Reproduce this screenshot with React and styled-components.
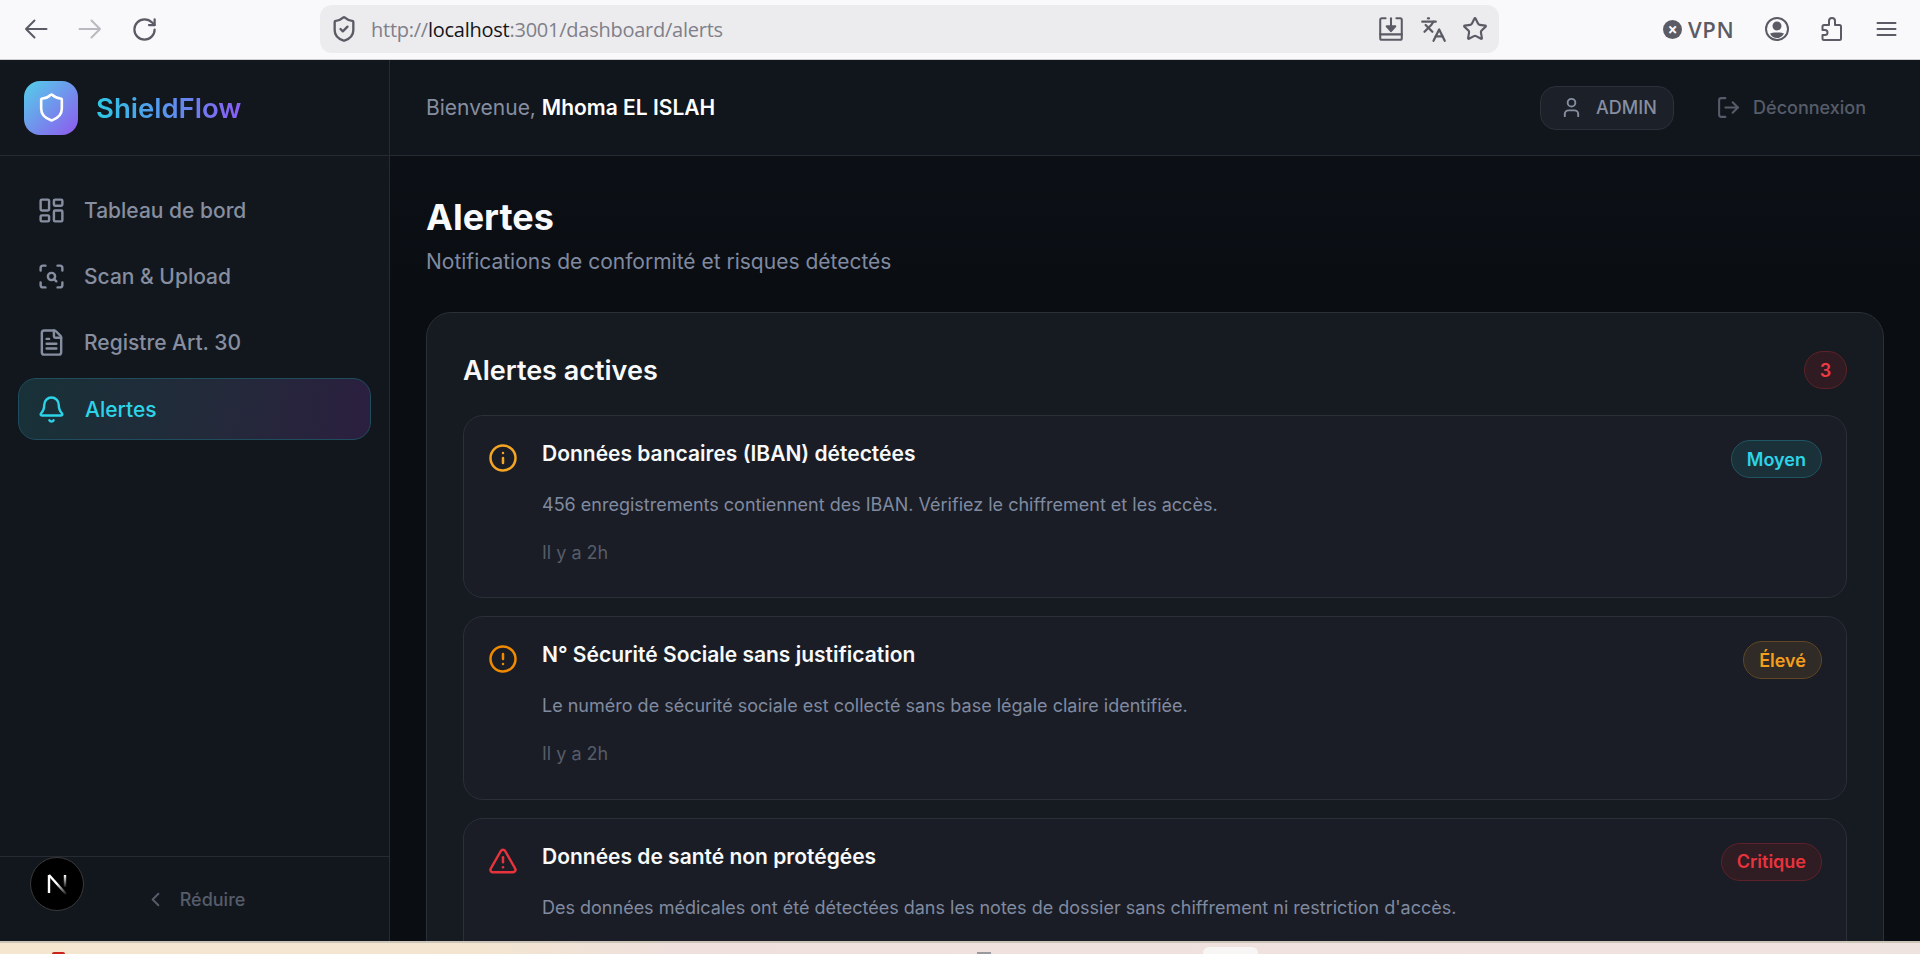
import React from 'react';
import styled, { createGlobalStyle } from 'styled-components';
import {
  RotateCw, ShieldCheck, Languages, Star, LayoutDashboard, ScanSearch,
  FileText, Bell, Info, CircleAlert, TriangleAlert, ChevronLeft, User, LogOut, Shield,
} from 'lucide-react';

const GlobalStyle = createGlobalStyle`
  * { box-sizing: border-box; }
  html, body { margin: 0; padding: 0; height: 954px; overflow: hidden; background: #0a0d12; }
  body { font-family: Inter, "Noto Sans", sans-serif; }
`;

const Page = styled.div`
  height: 954px;
  display: flex;
  flex-direction: column;
  position: relative;
`;

/* browser chrome */
const BrowserBar = styled.div`
  height: 60px;
  flex: none;
  display: flex;
  align-items: center;
  background: #f9f9fb;
  border-bottom: 1px solid #cfcfd3;
  padding-bottom: 1px;
`;

const NavIcons = styled.div`
  width: 320px;
  flex: none;
  display: flex;
  align-items: center;
  gap: 30px;
  padding-left: 24px;
  color: #5b5b66;
`;

const ReloadSlot = styled.span`
  display: flex;
  margin-left: -1px;
`;

const AddressBar = styled.div`
  width: 1179px;
  height: 48px;
  flex: none;
  display: flex;
  align-items: center;
  background: #ececee;
  border-radius: 12px;
  padding: 0 11px 0 10px;
  color: #5b5b66;
`;

const Url = styled.div`
  flex: 1;
  margin-left: 13px;
  font-family: "Open Sans", sans-serif;
  font-size: 20px;
  letter-spacing: -0.25px;
  color: #80808a;

  b {
    font-weight: 400;
    color: #15141a;
  }
`;

const AddressIcons = styled.div`
  display: flex;
  align-items: center;
  gap: 15px;
`;

const ToolIcons = styled.div`
  flex: 1;
  display: flex;
  align-items: center;
  padding-left: 164px;
  color: #5b5b66;
`;

const Vpn = styled.div`
  display: flex;
  align-items: center;
  gap: 6px;
  width: 101px;
  font-family: "Open Sans", sans-serif;
  font-size: 22px;
  letter-spacing: 0.6px;
  font-weight: 600;
`;

const VpnDot = styled.span`
  width: 19px;
  height: 19px;
  border-radius: 50%;
  background: #5b5b66;
  color: #f9f9fb;
  display: flex;
  align-items: center;
  justify-content: center;
  font-size: 17px;
  line-height: 19px;
  letter-spacing: 0;
  font-weight: 700;
`;

const ToolIconSlot = styled.span`
  display: flex;
  width: 56px;
`;

const Shell = styled.div`
  flex: 1;
  min-height: 0;
  display: flex;
`;

/* sidebar */
const Sidebar = styled.aside`
  width: 390px;
  flex: none;
  display: flex;
  flex-direction: column;
  background: #12171e;
  border-right: 1px solid #262b33;
`;

const Brand = styled.div`
  height: 96px;
  flex: none;
  display: flex;
  align-items: center;
  gap: 18px;
  padding-left: 24px;
  border-bottom: 1px solid #262b33;
`;

const LogoBox = styled.div`
  width: 54px;
  height: 54px;
  border-radius: 16px;
  background: linear-gradient(135deg, #52d0ea, #8f58ee);
  display: flex;
  align-items: center;
  justify-content: center;
  color: #fff;
`;

const BrandName = styled.div`
  font-size: 27.5px;
  font-weight: 600;
  background: linear-gradient(90deg, #2cc8e4, #8b5cf6);
  -webkit-background-clip: text;
  background-clip: text;
  color: transparent;
`;

const Nav = styled.nav`
  flex: 1;
  display: flex;
  flex-direction: column;
  gap: 5px;
  padding: 24px 18px 0;
`;

const NavItem = styled.div`
  height: ${p => (p.$active ? '62px' : '61px')};
  display: flex;
  align-items: center;
  gap: ${p => (p.$active ? '19px' : '18px')};
  padding-left: 18px;
  border-radius: 18px;
  font-size: 21px;
  font-weight: 500;
  color: ${p => (p.$active ? '#2dd4e8' : '#868ea0')};
  border: 1px solid ${p => (p.$active ? '#1f4d5e' : 'transparent')};
  background: ${p => (p.$active ? 'linear-gradient(100deg, #183138, #232a3a 55%, #2b1f3f)' : 'transparent')};
`;

const SidebarFoot = styled.div`
  height: 85px;
  flex: none;
  display: flex;
  align-items: center;
  justify-content: center;
  gap: 13px;
  border-top: 1px solid #262b33;
  color: #565c69;
  font-size: 18px;
  font-weight: 500;
`;

const DevBadge = styled.div`
  position: absolute;
  left: 30px;
  top: 857px;
  width: 54px;
  height: 54px;
  border-radius: 50%;
  background: #000;
  border: 1px solid #3a3a3a;
  display: flex;
  align-items: center;
  justify-content: center;
`;

/* main column */
const Main = styled.main`
  flex: 1;
  min-width: 0;
  display: flex;
  flex-direction: column;
  background: linear-gradient(180deg, #0e1218, #0a0d12 25%);
`;

const Header = styled.header`
  height: 96px;
  flex: none;
  display: flex;
  align-items: center;
  padding: 0 54px 0 36px;
  background: #11161d;
  border-bottom: 1px solid #262b33;
`;

const Welcome = styled.div`
  flex: 1;
  font-size: 21px;
  color: #868ea0;

  b {
    font-weight: 600;
    color: #fff;
  }
`;

const RolePill = styled.div`
  width: 134px;
  height: 44px;
  display: flex;
  align-items: center;
  gap: 13px;
  padding-left: 19px;
  background: #1c2028;
  border: 1px solid #2b3039;
  border-radius: 16px;
  color: #868ea0;
  font-size: 18px;
  font-weight: 500;
`;

const Logout = styled.div`
  display: flex;
  align-items: center;
  gap: 12px;
  margin-left: 42px;
  color: #565c69;
  font-size: 18px;
  font-weight: 500;
`;

const Content = styled.div`
  flex: 1;
  min-height: 0;
  overflow: hidden;
  padding: 38px 36px 0 36px;
`;

const PageTitle = styled.h1`
  margin: 0;
  font-size: 36px;
  line-height: 46px;
  font-weight: 700;
  color: #f8f9fb;
`;

const PageSub = styled.p`
  margin: 8px 0 0;
  font-size: 21px;
  line-height: 28px;
  color: #808aa0;
`;

const Card = styled.section`
  margin-top: 36px;
  padding: 37px 36px;
  background: #161a21;
  border: 1px solid #2a2f38;
  border-radius: 25px;
`;

const CardHead = styled.div`
  display: flex;
  align-items: center;
  justify-content: space-between;
  height: 40px;
  margin-bottom: 25px;
`;

const CardTitle = styled.h2`
  margin: 0;
  font-size: 27px;
  font-weight: 600;
  color: #f8f9fb;
`;

const CountBadge = styled.span`
  width: 43px;
  height: 38px;
  display: flex;
  align-items: center;
  justify-content: center;
  border-radius: 19px;
  background: #301b22;
  border: 1px solid #5d2229;
  color: #ef3a44;
  font-size: 18px;
  font-weight: 600;
`;

const AlertList = styled.div`
  display: flex;
  flex-direction: column;
  gap: 18px;
`;

const AlertRow = styled.article`
  height: 183.4px;
  display: flex;
  align-items: flex-start;
  gap: 24px;
  padding: 24px 24px 0 24px;
  background: #1a1d25;
  border: 1px solid #2a2f38;
  border-radius: 20px;
`;

const AlertIcon = styled.div`
  flex: none;
  display: flex;
  margin-top: 3px;
  color: ${p => p.$color};
`;

const AlertBody = styled.div`
  flex: 1;
  min-width: 0;
`;

const AlertTitle = styled.h3`
  margin: 0;
  font-size: 21px;
  line-height: 28px;
  font-weight: 600;
  color: #f8f9fb;
`;

const AlertText = styled.p`
  margin: 24px 0 0;
  font-size: 18px;
  line-height: 26px;
  color: #808aa0;
`;

const AlertTime = styled.div`
  margin-top: 22px;
  font-size: 18px;
  line-height: 26px;
  color: #565c69;
`;

const levels = {
  Moyen: { color: '#2dd4e8', bg: '#1b3139', border: '#1f5562' },
  'Élevé': { color: '#f59e1b', bg: '#302b27', border: '#5f4723' },
  Critique: { color: '#e8333d', bg: '#301c23', border: '#5d2229' },
};

const Level = styled.span`
  flex: none;
  height: 38px;
  display: flex;
  align-items: center;
  padding: 0 15px;
  border-radius: 19px;
  font-size: 18px;
  font-weight: 600;
  color: ${p => levels[p.$level].color};
  background: ${p => levels[p.$level].bg};
  border: 1px solid ${p => levels[p.$level].border};
`;

/* sliver of the desktop below the window */
const DesktopStrip = styled.div`
  height: 13px;
  flex: none;
  display: flex;
  align-items: flex-end;
  background: linear-gradient(90deg, #f4e6cf, #f3e5d0 25%, #efe0dd 35%, #efe3e0);
  border-top: 2px solid #cbc4b8;
`;

const RedDot = styled.span`
  width: 13px;
  height: 2px;
  margin-left: 52px;
  border-radius: 6px 6px 0 0;
  background: #c9231b;
`;

const GreyDot = styled.span`
  width: 14px;
  height: 2px;
  margin-left: 912px;
  background: #9a9a9e;
`;

const WhiteTab = styled.span`
  width: 55px;
  height: 7px;
  margin-left: 212px;
  border-radius: 6px 6px 0 0;
  background: #f8f6f4;
`;

const alerts = [
  {
    title: 'Données bancaires (IBAN) détectées',
    text: '456 enregistrements contiennent des IBAN. Vérifiez le chiffrement et les accès.',
    time: 'Il y a 2h',
    level: 'Moyen',
    Icon: Info,
    color: '#f5a524',
  },
  {
    title: 'N° Sécurité Sociale sans justification',
    text: 'Le numéro de sécurité sociale est collecté sans base légale claire identifiée.',
    time: 'Il y a 2h',
    level: 'Élevé',
    Icon: CircleAlert,
    color: '#f08a00',
  },
  {
    title: 'Données de santé non protégées',
    text: "Des données médicales ont été détectées dans les notes de dossier sans chiffrement ni restriction d'accès.",
    level: 'Critique',
    Icon: TriangleAlert,
    color: '#e8333d',
  },
];

const menu = [
  { label: 'Tableau de bord', Icon: LayoutDashboard },
  { label: 'Scan & Upload', Icon: ScanSearch },
  { label: 'Registre Art. 30', Icon: FileText },
  { label: 'Alertes', Icon: Bell, active: true },
];

const BackIcon = () => (
  <svg width="24" height="24" viewBox="0 0 24 24" fill="none" stroke="currentColor" strokeWidth="2" strokeLinecap="round" strokeLinejoin="round">
    <path d="M22.500 12H2M10.500 3.500L2 12l8.500 8.500" />
  </svg>
);

const ForwardIcon = () => (
  <svg width="24" height="24" viewBox="0 0 24 24" fill="none" stroke="#b9b9bf" strokeWidth="2" strokeLinecap="round" strokeLinejoin="round">
    <path d="M1.500 12H22M13.500 3.500L22 12l-8.500 8.500" />
  </svg>
);

const SaveIcon = () => (
  <svg width="28" height="28" viewBox="0 0 26 26" fill="none" stroke="currentColor" strokeWidth="1.900" strokeLinecap="round" strokeLinejoin="round">
    <path d="M8 3H4.500A1.500 1.500 0 0 0 3 4.500v17A1.500 1.500 0 0 0 4.500 23h17a1.500 1.500 0 0 0 1.500-1.500v-17A1.500 1.500 0 0 0 21.500 3H18" />
    <path d="M3 18h20" />
    <path d="M13 3v9" />
    <path d="M9 10.500h8L13 15z" fill="currentColor" />
  </svg>
);

const AccountIcon = () => (
  <svg width="26" height="26" viewBox="0 0 26 26" fill="none" stroke="currentColor" strokeWidth="2">
    <circle cx="13" cy="13" r="11" />
    <circle cx="13" cy="10" r="3.500" fill="currentColor" />
    <path d="M6 17.500c2-1.500 12-1.500 14 0c-1.500 3-4 4.500-7 4.500s-5.500-1.500-7-4.500z" fill="currentColor" stroke="none" />
  </svg>
);

const PuzzleIcon = () => (
  <svg width="24" height="26" viewBox="0 0 24 26" fill="none" stroke="currentColor" strokeWidth="2" strokeLinejoin="round">
    <path d="M4 24a1.500 1.500 0 0 1-1.500-1.500V19h2.500a2.500 2.500 0 0 0 0-5H2.500v-3.500A1.500 1.500 0 0 1 4 9h5V5a3 3 0 0 1 6 0v4h4.500A1.500 1.500 0 0 1 21 10.500v12a1.500 1.500 0 0 1-1.500 1.500z" />
  </svg>
);

const BurgerIcon = () => (
  <svg width="21" height="18" viewBox="0 0 21 18" stroke="currentColor" strokeWidth="2" strokeLinecap="round">
    <path d="M1.500 3h18M1.500 9h18M1.500 15h18" />
  </svg>
);

const NextLogo = () => (
  <svg width="26" height="26" viewBox="0 0 26 26" fill="none">
    <defs>
      <linearGradient id="next-diag" gradientUnits="userSpaceOnUse" x1="5" y1="4" x2="22" y2="23">
        <stop offset="0.45" stopColor="#fff" />
        <stop offset="1" stopColor="#fff" stopOpacity="0.1" />
      </linearGradient>
      <linearGradient id="next-stem" gradientUnits="userSpaceOnUse" x1="21" y1="4" x2="21" y2="16">
        <stop offset="0" stopColor="#fff" />
        <stop offset="1" stopColor="#fff" stopOpacity="0.1" />
      </linearGradient>
    </defs>
    <path d="M5 4v18" stroke="#fff" strokeWidth="2.400" />
    <path d="M5 4L22 23" stroke="url(#next-diag)" strokeWidth="2.400" />
    <path d="M21 4v12" stroke="url(#next-stem)" strokeWidth="2.400" />
  </svg>
);

export default function App() {
  return (
    <Page>
      <GlobalStyle />
      <BrowserBar>
        <NavIcons>
          <BackIcon />
          <ForwardIcon />
          <ReloadSlot><RotateCw size={27} strokeWidth={2} /></ReloadSlot>
        </NavIcons>
        <AddressBar>
          <ShieldCheck size={28} strokeWidth={2} />
          <Url>http://<b>localhost</b>:3001/dashboard/alerts</Url>
          <AddressIcons>
            <SaveIcon />
            <Languages size={27} strokeWidth={2} />
            <Star size={26} strokeWidth={2} />
          </AddressIcons>
        </AddressBar>
        <ToolIcons>
          <Vpn>
            <VpnDot>×</VpnDot>
            VPN
          </Vpn>
          <ToolIconSlot><AccountIcon /></ToolIconSlot>
          <ToolIconSlot><PuzzleIcon /></ToolIconSlot>
          <BurgerIcon />
        </ToolIcons>
      </BrowserBar>

      <Shell>
        <Sidebar>
          <Brand>
            <LogoBox><Shield size={31} strokeWidth={2} /></LogoBox>
            <BrandName>ShieldFlow</BrandName>
          </Brand>
          <Nav>
            {menu.map(({ label, Icon, active }) => (
              <NavItem key={label} $active={active}>
                <Icon size={29} strokeWidth={2} />
                {label}
              </NavItem>
            ))}
          </Nav>
          <SidebarFoot>
            <ChevronLeft size={23} strokeWidth={2} />
            Réduire
          </SidebarFoot>
        </Sidebar>

        <Main>
          <Header>
            <Welcome>Bienvenue, <b>Mhoma EL ISLAH</b></Welcome>
            <RolePill>
              <User size={23} strokeWidth={2} />
              ADMIN
            </RolePill>
            <Logout>
              <LogOut size={25} strokeWidth={2} />
              Déconnexion
            </Logout>
          </Header>
          <Content>
            <PageTitle>Alertes</PageTitle>
            <PageSub>Notifications de conformité et risques détectés</PageSub>
            <Card>
              <CardHead>
                <CardTitle>Alertes actives</CardTitle>
                <CountBadge>3</CountBadge>
              </CardHead>
              <AlertList>
                {alerts.map(({ title, text, time, level, Icon, color }) => (
                  <AlertRow key={title}>
                    <AlertIcon $color={color}><Icon size={30} strokeWidth={2} /></AlertIcon>
                    <AlertBody>
                      <AlertTitle>{title}</AlertTitle>
                      <AlertText>{text}</AlertText>
                      {time && <AlertTime>{time}</AlertTime>}
                    </AlertBody>
                    <Level $level={level}>{level}</Level>
                  </AlertRow>
                ))}
              </AlertList>
            </Card>
          </Content>
        </Main>
      </Shell>

      <DesktopStrip>
        <RedDot />
        <GreyDot />
        <WhiteTab />
      </DesktopStrip>

      <DevBadge><NextLogo /></DevBadge>
    </Page>
  );
}
